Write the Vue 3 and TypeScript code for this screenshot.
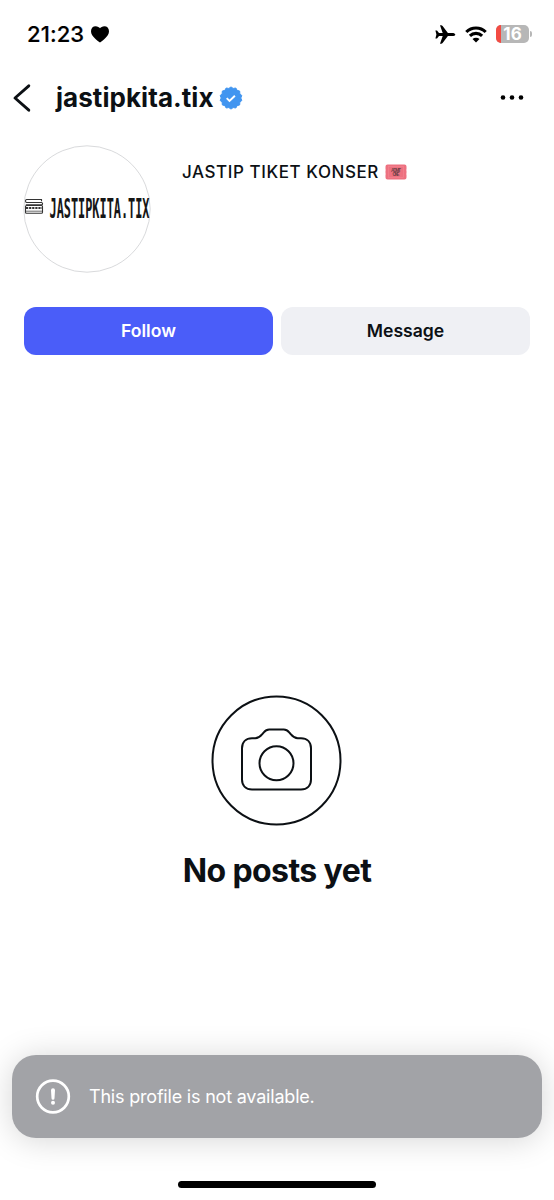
<script setup lang="ts">
const battery = 16
const profile = {
  handle: 'jastipkita.tix',
  name: 'JASTIP TIKET KONSER',
}

// Scalloped outline of the verified badge.
const lobes = 14
const badgePoints: string = Array.from({ length: lobes * 2 }, (_, i) => {
  const angle = (i * Math.PI) / lobes - Math.PI / 2
  const radius = i % 2 === 0 ? 11.1 : 9.8
  return `${(12 + radius * Math.cos(angle)).toFixed(2)},${(12 + radius * Math.sin(angle)).toFixed(2)}`
}).join(' ')
</script>

<template>
  <main class="screen">
    <div class="status">
      <span class="time">21:23</span>
      <svg class="heart" width="18" height="17" viewBox="0 0 18 17">
        <path d="M9 16.5C6.5 14.4 0 10.4 0 5.2 0 2.3 2 .3 4.6.3 6.6.3 8.2 1.4 9 2.3 9.8 1.4 11.4.3 13.4.3 16 .3 18 2.3 18 5.2 18 10.4 11.5 14.4 9 16.5Z" />
      </svg>
      <svg class="plane" width="21" height="19" viewBox="0 0 21 19">
        <path d="M20.3 9.5c0-.9-1.5-1.6-3.1-1.6h-4.3L7.6 1C7.2.4 6.8.2 6.2.2H5l2.7 7.7H4L2 5.4H.4l1 4.1-1 4.1H2l2-2.5h3.7L5 18.8h1.2c.6 0 1-.2 1.4-.8l5.3-6.9h4.3c1.6 0 3.1-.7 3.1-1.6Z" />
      </svg>
      <svg class="wifi" width="22" height="17" viewBox="0 0 22 17">
        <path d="M1.3 6a13.7 13.7 0 0 1 19.4 0M4.9 9.8a8.8 8.8 0 0 1 12.2 0" fill="none" stroke="#000" stroke-width="3.1" />
        <path d="m11 16.5-3.5-3.4a5 5 0 0 1 7 0Z" />
      </svg>
      <div class="battery"><span class="level" :style="{ width: battery + '%' }"></span><span class="percent">{{ battery }}</span></div>
      <span class="terminal"></span>
    </div>

    <header class="nav">
      <svg class="back" width="20" height="30" viewBox="0 0 20 30">
        <path d="M16.8 2.8 3 15 16.8 27.2" fill="none" stroke="#0c1014" stroke-width="2.9" stroke-linecap="round" stroke-linejoin="round" />
      </svg>
      <h1>{{ profile.handle }}</h1>
      <svg class="verified" width="24" height="24" viewBox="0 0 24 24">
        <polygon :points="badgePoints" fill="#4195f0" stroke="#4195f0" stroke-width="1" stroke-linejoin="round" />
        <path d="m7.7 12.2 2.8 2.8 5.4-5.3" fill="none" stroke="#fff" stroke-width="1.9" />
      </svg>
      <svg class="more" width="24" height="6" viewBox="0 0 24 6">
        <circle cx="3" cy="2.5" r="2.3" /><circle cx="12" cy="2.5" r="2.3" /><circle cx="21" cy="2.5" r="2.3" />
      </svg>
    </header>

    <section class="profile">
      <svg class="avatar" width="128" height="128" viewBox="0 0 128 128">
        <circle cx="64" cy="64" r="63.2" fill="#fff" stroke="#d9dadc" />
        <g fill="none" stroke="#333" stroke-width="1.1">
          <path d="M18.5 56.2v-1.7H3.6c-1.4 0-1.4 3 0 3h14.8c1.5 0 1.5 2.2.3 2.2H2.8" />
          <rect x="2.5" y="60.5" width="17" height="7.8" rx="1" />
          <path d="M3 63h16" stroke-width="2.2" stroke-dasharray="2.2 .9" />
          <path d="M3 66.2h16" stroke="#777" />
        </g>
        <text x="26.5" y="73" textLength="100" lengthAdjust="spacingAndGlyphs">JASTIPKITA.TIX</text>
      </svg>
      <div class="bio">
        <span>{{ profile.name }}</span>
        <svg width="22" height="16" viewBox="0 0 22 16">
          <path d="M2.5.5h17a2 2 0 0 1 2 2v3l-.4.5.4.5v3l-.4.5.4.5v3a2 2 0 0 1-2 2h-17a2 2 0 0 1-2-2v-3l.4-.5-.4-.5v-3L.9 6l-.4-.5v-3a2 2 0 0 1 2-2Z" fill="#ed7180" />
          <rect x="3.5" y="2.5" width="15" height="11" fill="none" stroke="#f2838f" stroke-width=".7" />
          <g class="ticket"><text x="11" y="7.5" textLength="10">ADMIT</text><text x="11" y="12" textLength="7">ONE</text></g>
        </svg>
      </div>
    </section>

    <div class="actions">
      <button class="follow" type="button">Follow</button>
      <button class="message" type="button">Message</button>
    </div>

    <section class="empty">
      <svg width="132" height="132" viewBox="0 0 132 132" fill="none" stroke="#0c1014" stroke-width="2">
        <circle cx="65.5" cy="65.5" r="64" />
        <path d="M41 43.3h3.3c3.2 0 5-1.7 7-4.1l1.5-1.8c1.6-2 3-2.9 5.4-2.9h14.6c2.4 0 3.8.9 5.4 2.9l1.5 1.8c2 2.4 3.8 4.1 7 4.1H90c6.1 0 10 3.9 10 10v31.3c0 6.1-3.9 10-10 10H41c-6.1 0-10-3.9-10-10V53.3c0-6.1 3.9-10 10-10Z" />
        <circle cx="65.5" cy="68.2" r="17" />
      </svg>
      <h2>No posts yet</h2>
    </section>

    <div class="toast">
      <svg width="36" height="36" viewBox="0 0 36 36">
        <circle cx="18" cy="17.5" r="15.8" fill="none" stroke="#fff" stroke-width="2.7" />
        <path d="M16 11.3a2 2 0 0 1 4 0l-.5 8a1.5 1.5 0 0 1-3 0Z" fill="#fff" />
        <circle cx="18" cy="23.7" r="2" fill="#fff" />
      </svg>
      <p>This profile is not available.</p>
    </div>
    <div class="home"></div>
  </main>
</template>

<style>
body { margin: 0; background: #fff; }
</style>

<style scoped>
* { box-sizing: border-box; }
.screen {
  height: 1200px;
  display: flex;
  flex-direction: column;
  overflow: hidden;
  background: #fff;
  color: #0c1014;
  font-family: Inter, "Liberation Sans", sans-serif;
}
svg { display: block; flex: none; overflow: visible; }
.status { height: 68px; padding: 0 22px 0 27px; display: flex; align-items: center; color: #000; }
.time { width: 64px; font-size: 22px; font-weight: 500; letter-spacing: .1px; white-space: nowrap; -webkit-text-stroke: .2px #000; }
.plane { margin-left: auto; margin-right: 9px; }
.wifi { margin-right: 9px; }
.battery { position: relative; width: 33px; height: 18px; border-radius: 5px; overflow: hidden; background: #b7b7b7; }
.level { display: block; height: 100%; background: #f34b43; }
.percent { position: absolute; inset: 0; text-align: center; font-size: 17px; line-height: 18px; font-weight: 700; color: #fff; }
.terminal { width: 2px; height: 6px; margin-left: 1px; border-radius: 0 2px 2px 0; background: #b7b7b7; }
.nav { height: 60px; padding: 0 30px 0 12px; display: flex; align-items: center; }
h1 { width: 158px; margin: 0 5px 0 24px; font-size: 26px; line-height: 32px; font-weight: 700; letter-spacing: .05px; white-space: nowrap; }
.more { margin-left: auto; }
.profile { height: 179px; padding: 17px 23px 0; display: flex; gap: 31px; }
.avatar text { font-family: "DejaVu Sans Mono", monospace; font-weight: 700; font-size: 27px; fill: #161616; }
.bio { height: 22px; margin-top: 16px; display: flex; align-items: center; gap: 6px; font-size: 17px; font-weight: 500; letter-spacing: .57px; white-space: nowrap; }
.ticket text { font-family: "Liberation Sans", sans-serif; font-size: 4.8px; font-weight: 700; letter-spacing: 0; text-anchor: middle; fill: #74424a; }
.actions { height: 48px; padding: 0 24px; display: grid; grid-template-columns: 1fr 1fr; gap: 8px; }
button { border: 0; border-radius: 12px; font: 600 17.6px/46px Inter, "Liberation Sans", sans-serif; padding: 0 0 1px; color: #0c1014; }
.follow { background: #4a5df9; color: #fff; }
.message { background: #eff0f4; }
.empty { margin-top: 340px; display: flex; flex-direction: column; align-items: center; }
h2 { margin: 24px 0 0; font-size: 32px; line-height: 40px; font-weight: 700; letter-spacing: -.6px; }
.toast { height: 83px; margin: 164px 12px 0; padding: 0 23px; display: flex; align-items: center; gap: 18px; border-radius: 24px; background: #a2a3a7; color: #fff; box-shadow: 0 2px 32px rgba(0, 0, 0, .17); }
.toast p { margin: 0; font-size: 18px; line-height: 24px; letter-spacing: -.2px; white-space: nowrap; }
.home { width: 198px; height: 7px; margin: 43px auto 0; border-radius: 4px; background: #000; }
</style>
